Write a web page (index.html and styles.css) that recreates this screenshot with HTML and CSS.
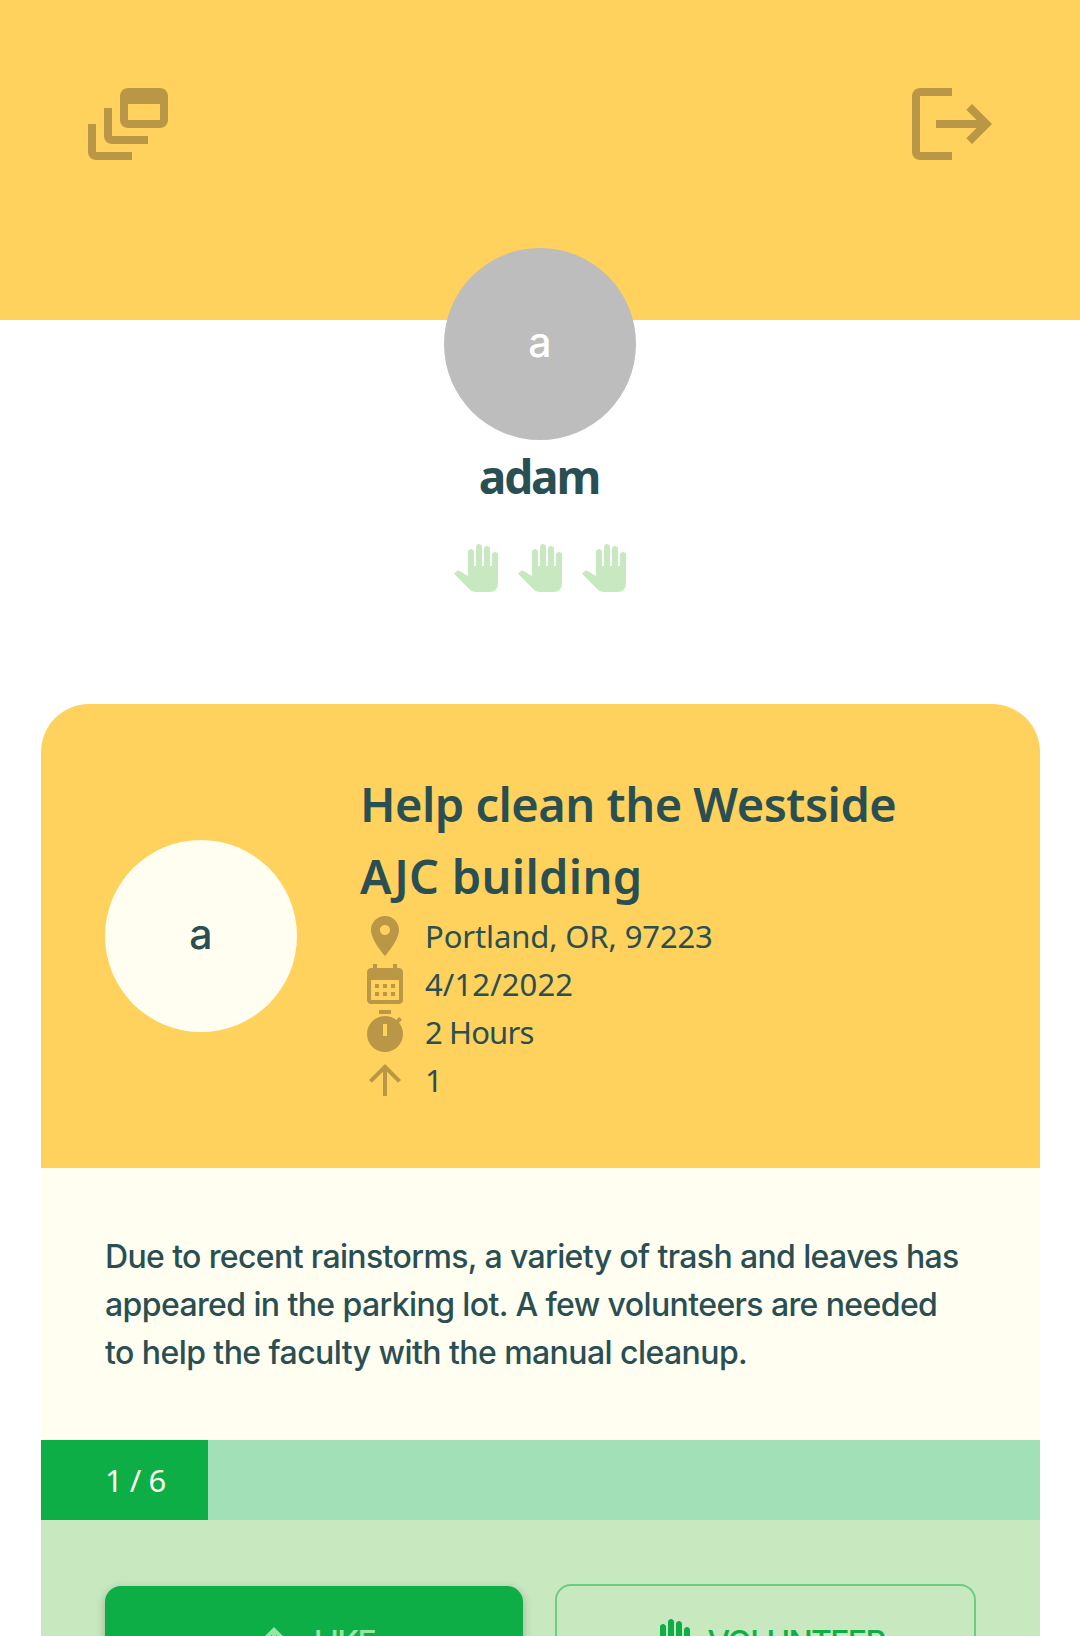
FILE: index.html
```html
<!DOCTYPE html>
<html lang="en">
<head>
  <meta charset="UTF-8">
  <title>Profile</title>
  <link rel="stylesheet" href="styles.css">
</head>
<body>

<header class="header">
  <svg class="icon icon-lg" viewBox="0 0 24 24">
    <path d="M8 8H6v7c0 1.1.9 2 2 2h9v-2H8V8z"/>
    <path d="M20 3h-8c-1.1 0-2 .9-2 2v6c0 1.1.9 2 2 2h8c1.1 0 2-.9 2-2V5c0-1.1-.9-2-2-2zm0 8h-8V7h8v4z"/>
    <path d="M4 12H2v7c0 1.1.9 2 2 2h9v-2H4v-7z"/>
  </svg>
  <svg class="icon icon-lg" viewBox="0 0 24 24">
    <path d="M17 7l-1.41 1.41L18.17 11H8v2h10.17l-2.58 2.58L17 17l5-5zM4 5h8V3H4c-1.1 0-2 .9-2 2v14c0 1.1.9 2 2 2h8v-2H4V5z"/>
  </svg>
</header>

<section class="profile">
  <div class="avatar avatar-user">a</div>
  <h1 class="username">adam</h1>
  <div class="rating">
    <svg class="icon" viewBox="0 0 24 24"><use href="#hand"/></svg>
    <svg class="icon" viewBox="0 0 24 24"><use href="#hand"/></svg>
    <svg class="icon" viewBox="0 0 24 24"><use href="#hand"/></svg>
  </div>
</section>

<article class="card">
  <div class="card-header">
    <div class="avatar avatar-post">a</div>
    <div class="card-info">
      <h2 class="card-title"><span class="t1">Help clean the Westside</span><br><span class="t2">AJC building</span></h2>
      <div class="detail">
        <svg class="icon" viewBox="0 0 24 24"><path d="M12 2C8.13 2 5 5.13 5 9c0 5.25 7 13 7 13s7-7.75 7-13c0-3.87-3.13-7-7-7zm0 9.5c-1.38 0-2.5-1.12-2.5-2.5s1.12-2.5 2.5-2.5 2.5 1.12 2.5 2.5-1.12 2.5-2.5 2.5z"/></svg>
        <span class="place">Portland, OR, 97223</span>
      </div>
      <div class="detail">
        <svg class="icon" viewBox="0 0 24 24"><path d="M19 4h-1V2h-2v2H8V2H6v2H5c-1.11 0-1.99.9-1.99 2L3 20c0 1.1.89 2 2 2h14c1.1 0 2-.9 2-2V6c0-1.1-.9-2-2-2zm0 16H5V10h14v10zM9 14H7v-2h2v2zm4 0h-2v-2h2v2zm4 0h-2v-2h2v2zm-8 4H7v-2h2v2zm4 0h-2v-2h2v2zm4 0h-2v-2h2v2z"/></svg>
        <span class="date">4/12/2022</span>
      </div>
      <div class="detail">
        <svg class="icon" viewBox="0 0 24 24"><path d="M9 1h6v2H9z"/><path d="M19.03 7.39l1.42-1.42c-.43-.51-.9-.99-1.41-1.41l-1.42 1.42C16.07 4.74 14.12 4 12 4c-4.97 0-9 4.03-9 9s4.02 9 9 9 9-4.03 9-9c0-2.12-.74-4.07-1.97-5.61zM13 14h-2V8h2v6z"/></svg>
        <span class="hours">2 Hours</span>
      </div>
      <div class="detail">
        <svg class="icon" viewBox="0 0 24 24"><use href="#arrow-up"/></svg>
        <span>1</span>
      </div>
    </div>
  </div>

  <p class="description"><span class="d1">Due to recent rainstorms, a variety of trash and leaves has</span><br>
    <span class="d2">appeared in the parking lot. A few volunteers are needed</span><br>
    <span class="d3">to help the faculty with the manual cleanup.</span></p>

  <div class="progress">
    <div class="progress-bar" style="width: 16.667%"><span>1 / 6</span></div>
  </div>

  <div class="actions">
    <button class="btn btn-like">
      <svg class="icon" viewBox="0 0 24 24"><use href="#arrow-up"/></svg>
      <span>LIKE</span>
    </button>
    <button class="btn btn-volunteer">
      <svg class="icon" viewBox="0 0 24 24"><use href="#hand"/></svg>
      <span>VOLUNTEER</span>
    </button>
  </div>
</article>

<!-- shared icons -->
<svg width="0" height="0">
  <defs>
    <path id="hand" d="M23 5.5V20c0 2.2-1.8 4-4 4h-7.3c-1.08 0-2.1-.43-2.85-1.19L1 14.83s1.26-1.23 1.3-1.25c.22-.19.49-.29.79-.29.22 0 .42.06.6.16.04.01 4.31 2.46 4.31 2.46V4c0-.83.67-1.5 1.5-1.5S11 3.17 11 4v7h1V1.5c0-.83.67-1.5 1.5-1.5S15 .67 15 1.5V11h1V2.5c0-.83.67-1.5 1.5-1.5s1.5.67 1.5 1.5V11h1V5.5c0-.83.67-1.5 1.5-1.5s1.5.67 1.5 1.5z"/>
    <path id="arrow-up" d="M4 12l1.41 1.41L11 7.83V20h2V7.83l5.58 5.59L20 12l-8-8-8 8z"/>
  </defs>
</svg>

</body>
</html>
```

FILE: styles.css
```css
* {
  box-sizing: border-box;
}

body {
  margin: 0;
  height: 100vh;
  overflow: hidden;
  background: #fff;
  color: #2a4f52;
  font-family: Inter, "Liberation Sans", sans-serif;
  font-size: 32px;
}

.icon {
  display: block;
  width: 48px;
  height: 48px;
  flex-shrink: 0;
  fill: #ba9747;
}

.icon-lg {
  width: 96px;
  height: 96px;
}

.header {
  display: flex;
  justify-content: space-between;
  height: 320px;
  padding: 76px 80px;
  background: #ffd15d;
}

.profile {
  display: flex;
  flex-direction: column;
  align-items: center;
  height: 384px;
  margin-top: -72px;
}

.avatar {
  display: flex;
  align-items: center;
  justify-content: center;
  width: 192px;
  height: 192px;
  flex-shrink: 0;
  padding-bottom: 5px;
  border-radius: 50%;
  font-size: 41px;
  font-weight: 500;
}

.avatar-user {
  background: #bdbdbd;
  color: #fff;
}

.avatar-post {
  background: #fffef0;
}

.username,
.card-title {
  margin: 0;
  font-family: "Noto Sans", sans-serif;
  font-weight: 600;
  font-size: 47px;
  line-height: 72px;
}

.username {
  padding-right: 2px;
  font-size: 46px;
  font-weight: 700;
  letter-spacing: -2.1px;
}

.rating {
  display: flex;
  gap: 16px;
  margin-top: 32px;
}

.rating .icon {
  fill: #c8e8c0;
}

.card {
  width: 999px;
  margin: 72px 0 0 41px;
  border-radius: 48px;
  overflow: hidden;
}

.card-header {
  display: flex;
  align-items: center;
  gap: 64px;
  padding: 64px;
  background: #ffd15d;
}

.card-title {
  margin-left: -1px;
  white-space: nowrap;
}

.t1 {
  letter-spacing: -0.5px;
}

.t2 {
  letter-spacing: 0.3px;
}

.detail {
  display: flex;
  align-items: center;
  gap: 16px;
  height: 48px;
  font-family: "Noto Sans", sans-serif;
  font-size: 31px;
}

.place {
  letter-spacing: -0.12px;
}

.date {
  letter-spacing: 0.1px;
}

.hours {
  letter-spacing: -0.85px;
}

.description {
  margin: 0;
  padding: 65px 64px 63px;
  background: #fffef0;
  font-weight: 450;
  line-height: 48px;
  white-space: nowrap;
}

.d1 {
  letter-spacing: -0.63px;
}

.d2 {
  letter-spacing: -0.61px;
}

.d3 {
  letter-spacing: -0.57px;
}

.progress {
  height: 80px;
  background: #a2e0b8;
}

.progress-bar {
  display: flex;
  align-items: center;
  height: 100%;
  padding-left: 64px;
  background: #0dae46;
  color: #fffef0;
  font-family: "Noto Sans", sans-serif;
  font-size: 31px;
  letter-spacing: -0.5px;
  white-space: nowrap;
}

.actions {
  display: flex;
  align-items: center;
  gap: 32px;
  padding: 64px;
  background: #c8e8c0;
}

.btn {
  display: flex;
  align-items: center;
  justify-content: center;
  gap: 16px;
  padding: 0 3px 0 0;
  border: none;
  border-radius: 16px;
  font-family: inherit;
  font-size: 32px;
  font-weight: 500;
  letter-spacing: -1.7px;
}

.btn span {
  padding-bottom: 1px;
}

.btn-like {
  width: 418px;
  height: 114px;
  background: #0dae46;
  color: #97e6a8;
  box-shadow: 0 3px 10px rgba(0, 0, 0, 0.25);
}

.btn-like .icon {
  fill: #97e6a8;
}

.btn-volunteer {
  width: 421px;
  height: 118px;
  border: 2px solid #6bcc83;
  background: transparent;
  color: #0dae46;
}

.btn-volunteer .icon {
  fill: #0dae46;
}
```
